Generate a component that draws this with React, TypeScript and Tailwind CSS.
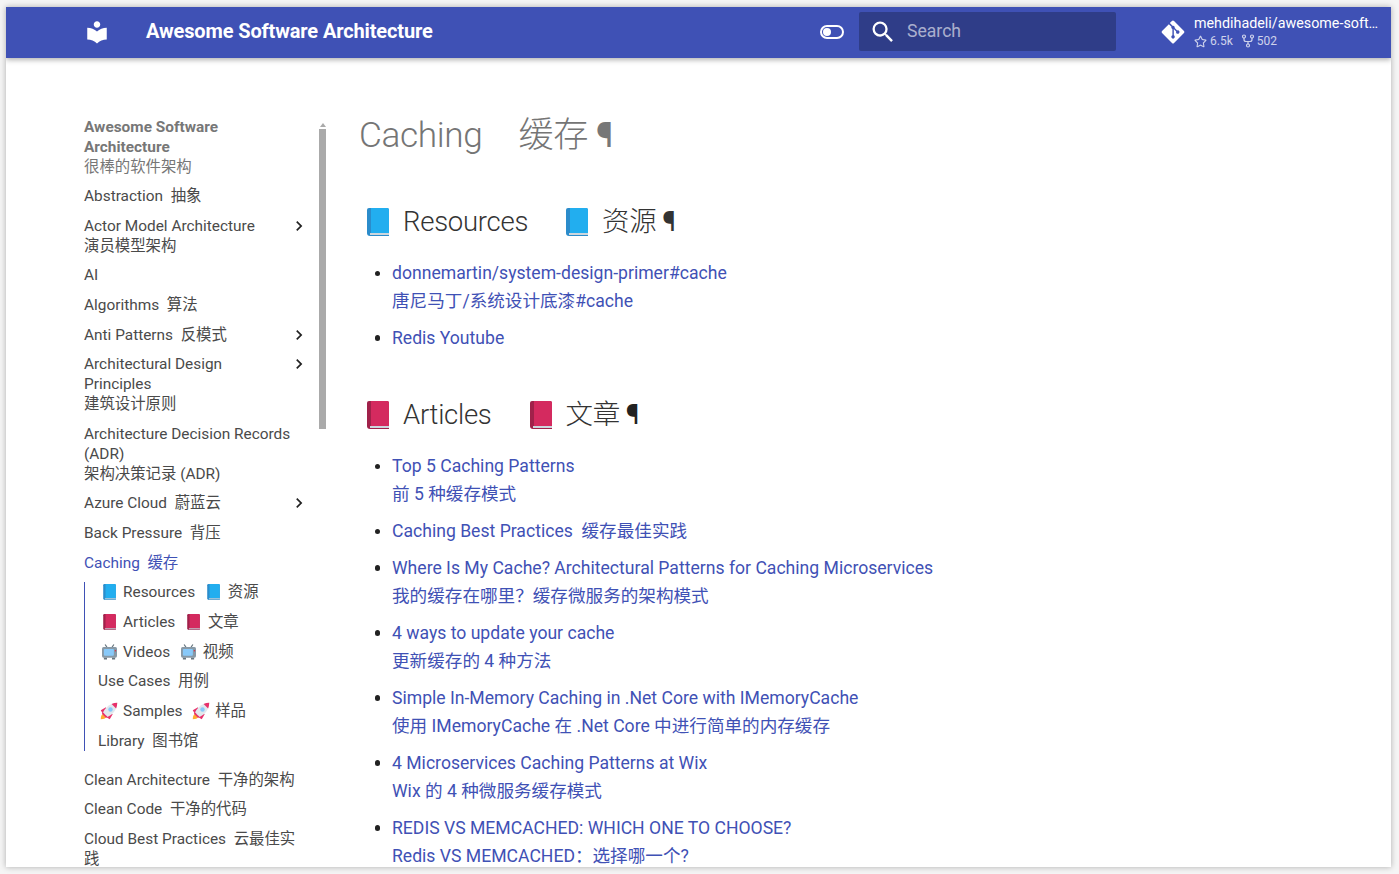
import { FaGitAlt, FaRegStar } from "react-icons/fa";
import { MdChevronRight, MdLocalLibrary, MdSearch } from "react-icons/md";

const font = "font-['Roboto','Noto_Sans_CJK_SC',sans-serif]";

function Book({ color, dark, className }: { color: string; dark: string; className: string }) {
  return (
    <svg viewBox="0 0 22 28" className={className}>
      <path d="M2 0h18a2 2 0 0 1 2 2v26H3a3 3 0 0 1-3-3V2a2 2 0 0 1 2-2z" fill={dark} />
      <path d="M4 0h16a2 2 0 0 1 2 2v23H4z" fill={color} />
      <path d="M3 25h19v2H3z" fill="#ccd6dd" />
    </svg>
  );
}

function Tv({ className }: { className: string }) {
  return (
    <svg viewBox="0 0 24 24" className={className}>
      <path d="M9 6 5 0M15 6l4-6" stroke="#66757f" strokeWidth="2" />
      <rect x="0" y="4" width="24" height="17" rx="2.5" fill="#8899a6" />
      <rect x="3" y="7" width="16" height="11" rx="1.5" fill="#88c9f9" />
      <path d="M3 21h5v3H3zM16 21h5v3h-5z" fill="#66757f" />
      <circle cx="21.500" cy="10" r="1.200" fill="#dd2e44" />
    </svg>
  );
}

function Rocket({ className }: { className: string }) {
  return (
    <svg viewBox="0 0 24 24" className={className}>
      <path d="M1 23c0-4 1-6 3-7.500L8.500 20C7 22 5 23 1 23z" fill="#ffac33" />
      <path d="M8 7 1 11l3 5 5 1zM17 16l-4 7-5-3-1-5z" fill="#e8306a" />
      <path d="M4 14C8 6 14 1.500 23 1c-.5 9-5 15-13 19z" fill="#e1e8ed" />
      <path d="M15.500 2.500 21.500 8.500c1-2.300 1.400-4.800 1.500-7.500-2.700.1-5.200.5-7.500 1.500zM4 14l6 6-2 1-5.500-5.500z" fill="#e8306a" />
      <circle cx="14" cy="10" r="3" fill="#88c9f9" />
    </svg>
  );
}

function SideIcon({ name }: { name: string }) {
  if (name === "blue") return <span className="inline-block w-[25px] pl-[4.5px]"><Book color="#22aeef" dark="#2b8ccb" className="inline-block w-[13px] h-[16px] align-[-3px]" /></span>;
  if (name === "red") return <span className="inline-block w-[25px] pl-[4.5px]"><Book color="#d42a5f" dark="#a0214a" className="inline-block w-[13px] h-[16px] align-[-3px]" /></span>;
  if (name === "tv") return <span className="inline-block w-[25px] pl-[3.5px]"><Tv className="inline-block w-[15px] h-[16px] align-[-3px]" /></span>;
  return <span className="inline-block w-[25px] pl-[2px]"><Rocket className="inline-block w-[18px] h-[18px] align-[-4px]" /></span>;
}

const before = [
  { text: "Abstraction\u00a0\u00a0抽象" },
  { text: "Actor Model Architecture", zh: "演员模型架构", arrow: true },
  { text: "AI" },
  { text: "Algorithms\u00a0\u00a0算法" },
  { text: "Anti Patterns\u00a0\u00a0反模式", arrow: true },
  { text: "Architectural Design Principles", zh: "建筑设计原则", arrow: true },
  { text: "Architecture Decision Records (ADR)", zh: "架构决策记录 (ADR)" },
  { text: "Azure Cloud\u00a0\u00a0蔚蓝云", arrow: true },
  { text: "Back Pressure\u00a0\u00a0背压" },
];

const toc = [
  { icon: "blue", en: "Resources", zh: "资源" },
  { icon: "red", en: "Articles", zh: "文章" },
  { icon: "tv", en: "Videos", zh: "视频" },
  { en: "Use Cases", zh: "用例" },
  { icon: "rocket", en: "Samples", zh: "样品" },
  { en: "Library", zh: "图书馆" },
];

const after = ["Clean Architecture\u00a0\u00a0干净的架构", "Clean Code\u00a0\u00a0干净的代码", "Cloud Best Practices\u00a0\u00a0云最佳实践"];

const resources = [
  { en: "donnemartin/system-design-primer#cache", zh: "唐尼马丁/系统设计底漆#cache" },
  { en: "Redis Youtube" },
];

const articles = [
  { en: "Top 5 Caching Patterns", zh: "前 5 种缓存模式" },
  { en: "Caching Best Practices\u00a0\u00a0缓存最佳实践" },
  { en: "Where Is My Cache? Architectural Patterns for Caching Microservices", zh: "我的缓存在哪里？缓存微服务的架构模式" },
  { en: "4 ways to update your cache", zh: "更新缓存的 4 种方法" },
  { en: "Simple In-Memory Caching in .Net Core with IMemoryCache", zh: "使用 IMemoryCache 在 .Net Core 中进行简单的内存缓存" },
  { en: "4 Microservices Caching Patterns at Wix", zh: "Wix 的 4 种微服务缓存模式" },
  { en: "REDIS VS MEMCACHED: WHICH ONE TO CHOOSE?", zh: "Redis VS MEMCACHED：选择哪一个?" },
];

function SideItem({ text, zh, arrow }: { text: string; zh?: string; arrow?: boolean }) {
  return (
    <li className={`mt-[9.6px] relative ${arrow ? "pr-[24px]" : ""}`}>
      <div>{text}</div>
      {zh && <div>{zh}</div>}
      {arrow && <MdChevronRight className="absolute right-[-11px] top-0 w-[20px] h-[20px] text-[#222]" />}
    </li>
  );
}

function LinkList({ items }: { items: { en: string; zh?: string }[] }) {
  return (
    <ul className="pl-[33px] text-[17.6px] leading-[28.1px] text-[#3f51b5]">
      {items.map((item) => (
        <li key={item.en} className="mt-[8.8px] relative before:content-[''] before:absolute before:left-[-17.5px] before:top-[11.5px] before:w-[5.5px] before:h-[5.5px] before:rounded-full before:bg-[#222]">
          <div>{item.en}</div>
          {item.zh && <div>{item.zh}</div>}
        </li>
      ))}
    </ul>
  );
}

export default function App() {
  return (
    <div className={`${font} w-[1399px] h-[874px] overflow-hidden bg-[#f5f5f5] pl-[6px] pr-[8px] pt-[7px] pb-[7px]`}>
      <div className="h-full bg-white overflow-hidden flex flex-col shadow-[0_0_6px_rgba(0,0,0,0.3)]">
        <header className="h-[51px] shrink-0 bg-[#3f51b5] text-white flex items-center pb-[2px] shadow-[0_2px_5px_rgba(0,0,0,0.3)] relative z-10">
          <MdLocalLibrary className="ml-[78px] w-[26px] h-[26px]" />
          <div className="ml-[36px] mb-[2px] text-[20px] font-bold tracking-[-0.13px] w-[674px]">Awesome Software Architecture</div>
          <svg viewBox="0 0 24 14" className="w-[24px] h-[14px]">
            <rect x="1" y="1" width="22" height="12" rx="6" fill="none" stroke="white" strokeWidth="2" />
            <circle cx="7" cy="7" r="4" fill="white" />
          </svg>
          <div className="ml-[15px] w-[257px] h-[39px] rounded-[2px] bg-[#2f3d88] flex items-center">
            <MdSearch className="ml-[10px] w-[28px] h-[28px]" />
            <span className="ml-[10px] text-[17.6px] text-white/60">Search</span>
          </div>
          <div className="ml-[44px] flex items-center">
            <FaGitAlt className="w-[26px] h-[26px]" />
            <div className="ml-[8px] w-[190px]">
              <div className="text-[14.3px] leading-[19px] whitespace-nowrap">mehdihadeli/awesome-soft…</div>
              <div className="flex items-center text-[12px] leading-[16px] text-white/75">
                <FaRegStar className="w-[13px] h-[13px] mr-[3px]" />
                6.5k
                <svg viewBox="0 0 14 14" fill="none" stroke="currentColor" strokeWidth="1.200" className="ml-[8px] w-[14px] h-[14px] mr-[2px]">
                  <circle cx="3" cy="2.500" r="1.500" />
                  <circle cx="11" cy="2.500" r="1.500" />
                  <circle cx="7" cy="11.500" r="1.500" />
                  <path d="M3 4v1.500a2 2 0 0 0 2 2h4a2 2 0 0 0 2-2V4M7 7.500V10" />
                </svg>
                502
              </div>
            </div>
          </div>
        </header>

        <div className="flex flex-1 min-h-0">
          <aside className="w-[314px] shrink-0 relative pl-[78px] pt-[58.500px] pr-[22px] text-[15.4px] leading-[20.02px] text-[#4a4a4a]">
            <div className="font-bold text-[#777] w-[200px]">
              Awesome Software Architecture
              <div className="font-normal">很棒的软件架构</div>
            </div>
            <ul className="mt-[1.5px]">
              {before.map((item) => (
                <SideItem key={item.text} {...item} />
              ))}
              <li className="mt-[9.6px] text-[#3f51b5]">Caching&nbsp;&nbsp;缓存</li>
              <li>
                <ul className="border-l border-[#3f51b5] mt-[9.6px] pl-[13px]">
                  {toc.map((item, i) => (
                    <li key={item.en} className={i === 0 ? "" : "mt-[9.7px]"}>
                      {item.icon && <SideIcon name={item.icon} />}
                      {item.en}&nbsp;&nbsp;
                      {item.icon && <SideIcon name={item.icon} />}
                      {item.zh}
                    </li>
                  ))}
                </ul>
              </li>
              {after.map((text, i) => (
                <li key={text} className={i === 0 ? "mt-[19px]" : "mt-[9.6px]"}>{text}</li>
              ))}
            </ul>
            <div className="absolute left-[313px] top-[71px] w-[7px] h-[300px] bg-[#aaaaaa]" />
            <div className="absolute left-[314px] top-[65px] w-0 h-0 border-x-[3px] border-x-transparent border-b-[4px] border-b-[#aaaaaa]" />
          </aside>

          <main className="flex-1 pl-[39px] text-[#222]">
            <h1 className="mt-[54px] text-[35.2px] leading-[46px] tracking-[-0.35px] font-light text-[#757575] flex items-center">
              Caching<span className="ml-[36px]">缓存</span><span className="ml-[8px] text-[#777] font-normal">¶</span>
            </h1>
            <h2 className="mt-[44px] text-[27.5px] leading-[40px] tracking-[-0.27px] font-light text-[#333] flex items-center">
              <Book color="#22aeef" dark="#2b8ccb" className="ml-[8px] w-[22px] h-[28px] mr-[14px]" />
              Resources
              <Book color="#22aeef" dark="#2b8ccb" className="ml-[38px] w-[22px] h-[28px] mr-[14px]" />
              资源<span className="ml-[6px] text-[#333] font-normal">¶</span>
            </h2>
            <div className="mt-[17px]"><LinkList items={resources} /></div>
            <h2 className="mt-[43px] text-[27.5px] leading-[40px] tracking-[-0.27px] font-light text-[#333] flex items-center">
              <Book color="#d42a5f" dark="#a0214a" className="ml-[8px] w-[22px] h-[28px] mr-[14px]" />
              Articles
              <Book color="#d42a5f" dark="#a0214a" className="ml-[38px] w-[22px] h-[28px] mr-[14px]" />
              文章<span className="ml-[6px] text-[#222] font-normal">¶</span>
            </h2>
            <div className="mt-[17px]"><LinkList items={articles} /></div>
          </main>
        </div>
      </div>
    </div>
  );
}
